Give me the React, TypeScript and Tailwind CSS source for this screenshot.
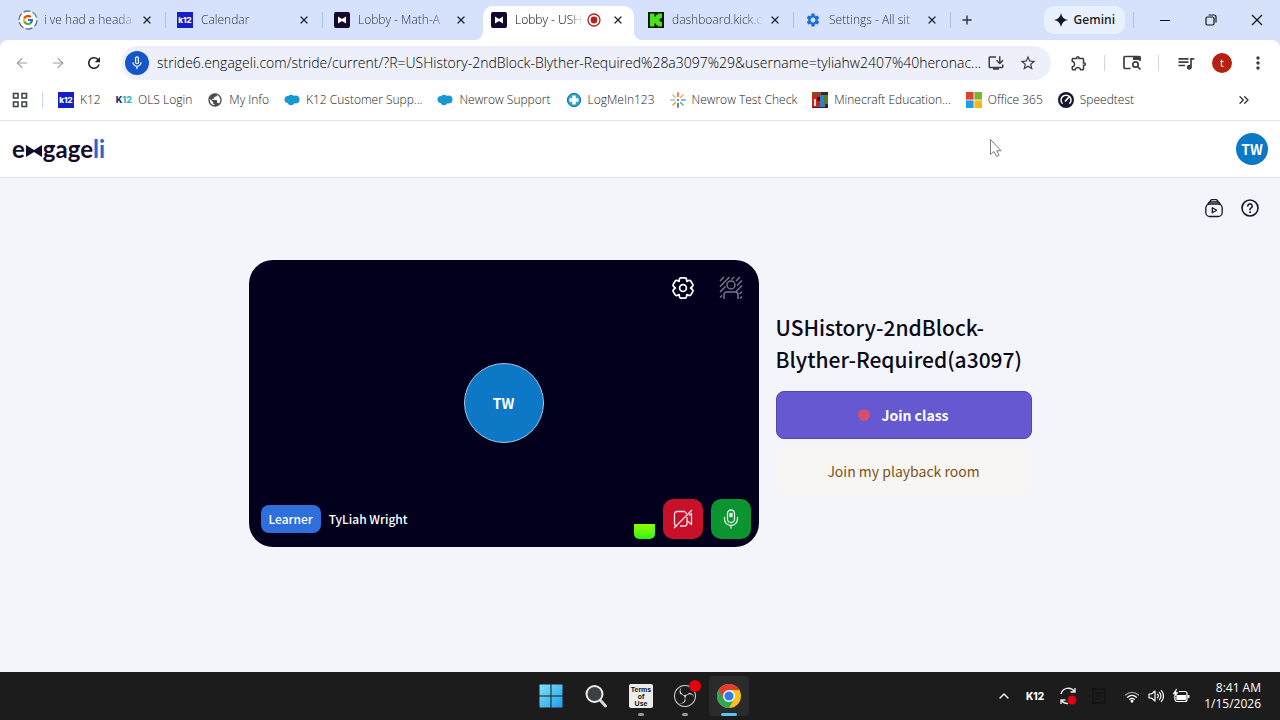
import type { ReactNode } from "react";
import { ArrowLeft, ArrowRight, ChevronUp, ChevronsRight, Plus, X } from "lucide-react";
import { FcGoogle } from "react-icons/fc";
import { MdMicNone, MdPublic, MdQueueMusic, MdRefresh, MdSettings, MdStarBorder, MdOutlineExtension, MdInstallDesktop, MdMoreVert } from "react-icons/md";
import { SiObsstudio } from "react-icons/si";

const url =
  "stride6.engageli.com/stride/current/?R=USHistory-2ndBlock-Blyther-Required%28a3097%29&username=tyliahw2407%40heronac...";

function K12Icon() {
  return (
    <span className="flex size-4 shrink-0 items-center justify-center bg-[#1420c4] font-['Inter'] text-[8px] leading-none font-extrabold text-white">
      k12
    </span>
  );
}

function BowTieIcon() {
  return (
    <svg viewBox="0 0 16 16" className="size-4 shrink-0">
      <rect width="16" height="16" rx="2" fill="#130a2b" />
      <path d="M4 4.500 8 7l4-2.500v7L8 9l-4 2.500z" fill="#fff" />
    </svg>
  );
}

function GoogleIcon() {
  return (
    <span className="relative flex size-4 shrink-0 items-center justify-center">
      <svg viewBox="0 0 20 20" className="absolute -inset-0.5 size-5">
        <circle cx="10" cy="10" r="9" fill="#fff" stroke="#5d7391" strokeWidth="1.300" strokeDasharray="7 2.400" />
      </svg>
      <FcGoogle className="relative size-3" />
    </span>
  );
}

function KickIcon() {
  return (
    <svg viewBox="0 0 16 16" className="size-4 shrink-0">
      <rect width="16" height="16" fill="#0a1408" />
      <path d="M2 1.500h4.500v3H8V3h1.500V1.500H14V6h-1.500v1.500H11v1h1.500V10H14v4.500H9.500V13H8v-1.500H6.500v3H2z" fill="#4be01e" />
    </svg>
  );
}

function CloudIcon() {
  return (
    <svg viewBox="0 0 16 16" className="size-4 shrink-0" fill="#1798d0">
      <circle cx="4" cy="7.500" r="3.500" />
      <circle cx="7" cy="5.800" r="3" />
      <circle cx="11.500" cy="7.500" r="4" />
      <circle cx="7" cy="9.800" r="3.400" />
    </svg>
  );
}

function LogMeInIcon() {
  return (
    <svg viewBox="0 0 16 16" className="size-4 shrink-0">
      <circle cx="8" cy="8" r="7" fill="#2ba8df" />
      <circle cx="8" cy="8" r="6.500" fill="none" stroke="#1c6d9c" />
      <path d="M6.300 3.500h3.400v2.800h2.800v3.400H9.700v2.800H6.300V9.700H3.500V6.300h2.800z" fill="#fff" />
    </svg>
  );
}

function SparkIcon() {
  const colors = ["#e0574f", "#e9b44c", "#4aa3df", "#58b28a", "#445a78", "#e9a23c", "#8ac6d8", "#e8c45a"];
  return (
    <svg viewBox="0 0 16 16" className="size-4 shrink-0" strokeWidth="1.500" strokeLinecap="round">
      {colors.map((c, i) => (
        <path key={c} d="M8 .8v3.700" stroke={c} transform={`rotate(${i * 45} 8 8)`} />
      ))}
      <circle cx="8" cy="8" r="1" fill="#445a78" />
    </svg>
  );
}

function MinecraftIcon() {
  return (
    <svg viewBox="0 0 16 16" className="size-4 shrink-0">
      <rect width="16" height="16" fill="#3b2723" />
      <rect y="3" width="8" height="12" fill="#c8231c" />
      <path d="M2 7h2v7H2z" fill="#f0d8d0" />
      <rect x="8" y="3" width="5" height="12" fill="#2c7fc9" />
      <rect x="12" y="3" width="4" height="9" fill="#567d2a" />
      <path d="M0 0h9v3H0z" fill="#8a4a26" />
      <path d="M5 5h3v4H5z" fill="#35151a" />
    </svg>
  );
}

function MicrosoftIcon() {
  return (
    <svg viewBox="0 0 16 16" className="size-4 shrink-0">
      <path d="M0 0h7.600v7.600H0z" fill="#e0412c" />
      <path d="M8.400 0H16v7.600H8.400z" fill="#76b82a" />
      <path d="M0 8.400h7.600V16H0z" fill="#1d9fe3" />
      <path d="M8.400 8.400H16V16H8.400z" fill="#f8b71c" />
    </svg>
  );
}

function SpeedtestIcon() {
  return (
    <svg viewBox="0 0 16 16" className="size-4 shrink-0">
      <circle cx="8" cy="8" r="8" fill="#15152b" />
      <path d="M4.600 11.800a5 5 0 1 1 6.800 0" fill="none" stroke="#fff" strokeWidth="1.500" />
      <path d="m7 9.500 3.800-4.200" stroke="#fff" strokeWidth="1.700" />
    </svg>
  );
}

const tabs = [
  { title: "i ve had a heada", icon: <GoogleIcon /> },
  { title: "Calendar", icon: <K12Icon /> },
  { title: "Lobby - Math-A", icon: <BowTieIcon /> },
  { title: "Lobby - USH", icon: <BowTieIcon />, active: true },
  { title: "dashboard.kick.c", icon: <KickIcon /> },
  { title: "Settings - All sit", icon: <MdSettings className="size-4 shrink-0 text-[#1a6fd8]" /> },
];

const bookmarks = [
  { label: "K12", icon: <K12Icon /> },
  {
    label: "OLS Login",
    icon: (
      <span className="font-['Inter'] text-[9px] leading-4 font-extrabold text-[#12356b]">
        K<span className="text-[#2bb5c9]">12</span>
      </span>
    ),
  },
  { label: "My Info", icon: <MdPublic className="size-4 shrink-0 text-[#4a4c50]" /> },
  { label: "K12 Customer Supp...", icon: <CloudIcon /> },
  { label: "Newrow Support", icon: <CloudIcon /> },
  { label: "LogMeIn123", icon: <LogMeInIcon /> },
  { label: "Newrow Test Check", icon: <SparkIcon /> },
  { label: "Minecraft Education...", icon: <MinecraftIcon /> },
  { label: "Office 365", icon: <MicrosoftIcon /> },
  { label: "Speedtest", icon: <SpeedtestIcon /> },
];

function Tab({ title, icon, active, divider }: { title: string; icon: ReactNode; active?: boolean; divider: boolean }) {
  return (
    <div className="relative flex w-[157px] min-w-0 items-end">
      <div className={`flex h-[34px] w-full items-center pb-[6px] ${active ? "mx-[3px] rounded-t-[10px] bg-white pl-2" : "pl-[11px]"}`}>
        {icon}
        <span
          className={`ml-2 grow overflow-hidden text-[12px] leading-4 font-light whitespace-nowrap [mask-image:linear-gradient(to_right,black_80%,transparent)] ${active ? "max-w-[68px] text-black" : "max-w-[92px] text-[#2b3242]"}`}
        >
          {title}
        </span>
        {active && (
          <svg viewBox="0 0 14 14" className="ml-1 size-[14px] shrink-0" role="img" aria-label="Recording">
            <circle cx="7" cy="7" r="6" fill="none" stroke="#b3261e" strokeWidth="1.300" />
            <circle cx="7" cy="7" r="3.400" fill="#b3261e" />
          </svg>
        )}
        <button className={`ml-auto flex size-4 shrink-0 items-center justify-center ${active ? "mr-2" : "mr-[11px]"}`} aria-label="Close tab">
          <X className="size-3 text-[#1f2530]" strokeWidth={2.6} />
        </button>
      </div>
      {active && (
        <>
          <svg viewBox="0 0 8 8" className="absolute bottom-0 -left-[5px] size-2">
            <path d="M8 0v8H0a8 8 0 0 0 8-8z" fill="#fff" />
          </svg>
          <svg viewBox="0 0 8 8" className="absolute -right-[5px] bottom-0 size-2">
            <path d="M0 0v8h8a8 8 0 0 1-8-8z" fill="#fff" />
          </svg>
        </>
      )}
      {divider && <div className="absolute top-3 right-0 h-4 w-px bg-[#a9bfe4]" />}
    </div>
  );
}

function Browser() {
  return (
    <div className="bg-[#d6e2fb] font-['Open_Sans',sans-serif]">
      <div className="flex h-10 pl-[9px]">
        {tabs.map((t, i) => (
          <Tab key={t.title} {...t} divider={i !== 2 && i !== 3} />
        ))}
        <button className="ml-2 flex w-4 items-center justify-center" aria-label="New tab">
          <Plus className="size-[14px] shrink-0 text-[#2c3442]" strokeWidth={2.4} />
        </button>
        <div className="ml-auto flex items-center">
          <button className="flex h-7 items-center gap-[6px] rounded-[10px] bg-[#e9f1fe] px-[10px] text-[12px] font-semibold text-[#1f1f1f]">
            <svg viewBox="0 0 14 14" className="size-[14px]">
              <path d="M7 0q1 6 7 7-6 1-7 7-1-6-7-7 6-1 7-7z" fill="#15181f" />
            </svg>
            Gemini
          </button>
          <div className="mr-2 ml-2 h-4 w-px bg-[#a9bfe4]" />
          <button className="flex h-10 w-[46px] items-center justify-center" aria-label="Minimize">
            <svg viewBox="0 0 10 10" className="size-[10px]"><path d="M0 5.500h10" stroke="#111" /></svg>
          </button>
          <button className="flex h-10 w-[46px] items-center justify-center" aria-label="Restore">
            <svg viewBox="0 0 12 12" className="size-3" fill="none" stroke="#111" strokeWidth="1.200">
              <rect x="1" y="3" width="8" height="8" rx="1.500" />
              <path d="M3.500 1H9a2 2 0 0 1 2 2v5.500" />
            </svg>
          </button>
          <button className="flex h-10 w-[46px] items-center justify-center" aria-label="Close">
            <svg viewBox="0 0 12 12" className="size-3"><path d="m1 1 10 10M11 1 1 11" stroke="#111" strokeWidth="1.200" /></svg>
          </button>
        </div>
      </div>

      <div className="rounded-t-lg border-b border-[#e3e5ea] bg-white">
        <div className="flex h-[46px] items-center pl-[14px] text-[#3a3d42]">
          <button className="mr-5 text-[#9a9da2]" aria-label="Back"><ArrowLeft className="size-4" strokeWidth={1.7} /></button>
          <button className="mr-[19px] text-[#9a9da2]" aria-label="Forward"><ArrowRight className="size-4" strokeWidth={1.7} /></button>
          <button className="mr-[18px] text-[#1f1f1f]" aria-label="Reload"><MdRefresh className="size-[18px]" /></button>
          <div className="flex h-[34px] min-w-0 grow items-center rounded-full bg-[#edf0fa] pl-1">
            <button className="flex size-6 shrink-0 items-center justify-center rounded-full bg-[#1556cc] text-white" aria-label="Microphone in use">
              <MdMicNone className="size-4" />
            </button>
            <input
              aria-label="Address"
              defaultValue={url}
              className="ml-2 w-0 min-w-0 grow bg-transparent text-[14px] leading-5 font-light text-ellipsis text-black outline-none"
            />
            <button className="ml-1 shrink-0" aria-label="Install app"><MdInstallDesktop className="size-[18px]" /></button>
            <button className="mr-[14px] ml-[14px] shrink-0" aria-label="Bookmark"><MdStarBorder className="size-[18px]" /></button>
          </div>
          <button className="ml-[19px]" aria-label="Extensions"><MdOutlineExtension className="size-[18px]" /></button>
          <div className="mx-4 h-4 w-px bg-[#c9d6ee]" />
          <button className="ml-[2px]" aria-label="Search side panel">
            <svg viewBox="0 0 18 16" className="h-4 w-[18px]" fill="none" stroke="currentColor" strokeWidth="1.700">
              <path d="M7.500 13.500H2a1 1 0 0 1-1-1v-10a1 1 0 0 1 1-1h14a1 1 0 0 1 1 1V6" />
              <path d="M10 1h7.500v4H10z" fill="currentColor" stroke="none" />
              <circle cx="12.500" cy="9.500" r="2.700" />
              <path d="m14.500 11.500 3 3" />
            </svg>
          </button>
          <div className="mx-[17px] h-4 w-px bg-[#c9d6ee]" />
          <button aria-label="Media controls"><MdQueueMusic className="size-5" /></button>
          <button className="ml-4 flex size-5 items-center justify-center rounded-full bg-[#b5200f] text-[11px] text-white">t</button>
          <button className="mr-3 ml-4" aria-label="Menu"><MdMoreVert className="size-5" /></button>
        </div>

        <div className="flex h-[34px] items-center pb-[6px] pl-3">
          <button className="flex size-4 items-center justify-center" aria-label="Apps">
            <svg viewBox="0 0 16 16" className="size-4" fill="none" stroke="#44474b" strokeWidth="1.600">
              <rect x="1.500" y="1.500" width="4.500" height="4.500" />
              <rect x="10" y="1.500" width="4.500" height="4.500" />
              <rect x="1.500" y="10" width="4.500" height="4.500" />
              <rect x="10" y="10" width="4.500" height="4.500" />
            </svg>
          </button>
          <div className="mr-[15px] ml-[14px] h-4 w-px bg-[#c9d6ee]" />
          <nav className="flex items-center gap-[15px]">
            {bookmarks.map((b) => (
              <a key={b.label} href="#" className="flex items-center gap-[6px] text-[12px] leading-4 font-light whitespace-nowrap text-[#202226]">
                {b.icon}
                {b.label}
              </a>
            ))}
          </nav>
          <button className="mr-7 ml-auto" aria-label="More bookmarks"><ChevronsRight className="size-4 text-[#33363b]" /></button>
        </div>
      </div>
    </div>
  );
}

function Logo() {
  return (
    <a href="#" aria-label="engageli" className="flex items-center font-['Lato'] text-[24px] leading-7 font-bold text-[#130d2b]">
      e
      <svg viewBox="0 0 16 12" className="mt-1 mr-px ml-px h-3 w-4">
        <path d="M0 0 8 5l8-5v12L8 7l-8 5z" fill="#130d2b" />
      </svg>
      gage<span className="text-[#2c5fdd]">li</span>
    </a>
  );
}

function VideoPreview() {
  return (
    <section className="flex aspect-video w-[510px] flex-col justify-between rounded-3xl bg-[#03001e] p-2 text-white">
      <div className="flex justify-end gap-2">
        <button className="flex size-10 items-center justify-center" aria-label="Settings">
          <svg viewBox="0 0 24 24" className="size-6" fill="none" stroke="#fff" strokeWidth="1.700" strokeLinejoin="round">
            <path d="M8.200 5.400C8.200 3 8.700 1.800 10 1.800h4c1.300 0 1.800 1.200 1.800 3.600 2-1.100 3.400-1.300 4.100-.2l1.900 3.200c.7 1.200-.2 2.300-2.200 3.600 2 1.300 2.900 2.400 2.200 3.600l-1.900 3.200c-.7 1.100-2.100.9-4.100-.2 0 2.400-.5 3.600-1.800 3.600h-4c-1.300 0-1.800-1.200-1.800-3.600-2 1.100-3.400 1.300-4.100.2l-1.900-3.200c-.7-1.200.2-2.300 2.200-3.600-2-1.300-2.900-2.400-2.200-3.600l1.900-3.200c.7-1.100 2.100-.9 4.100.2z" />
            <circle cx="12" cy="12" r="3.400" />
          </svg>
        </button>
        <button className="flex size-10 items-center justify-center" aria-label="Background effects">
          <svg viewBox="0 0 24 24" className="size-6" fill="none" stroke="#77758a" strokeWidth="1.500">
            <circle cx="12" cy="9" r="4" />
            <path d="M5 23v-4.500A2.500 2.500 0 0 1 7.500 16h9a2.500 2.500 0 0 1 2.500 2.500V23" />
            <path d="m1 5 4-4M1 10.500 10.500 1M1 16l5.500-5.500M1 21.500l2-2M12.500 3.500 15 1M17 5l4-4M18 9.500l5-5M17 15.500l6-6M20.500 18l2.500-2.500M21 22.500l2-2" />
          </svg>
        </button>
      </div>

      <div className="flex size-20 items-center justify-center self-center rounded-full border border-[#a9c6e6] bg-[#0c78c6] text-[14px] font-bold">
        TW
      </div>

      <div className="flex items-end">
        <div className="mb-[6px] ml-1 flex items-center gap-2 text-[12px] leading-5 font-medium">
          <span className="rounded-lg bg-[#2f6fdc] px-2 py-1">Learner</span>
          <span>TyLiah Wright</span>
        </div>
        <div className="ml-auto h-[15px] w-[21px] rounded-b-[5px] bg-linear-to-b from-[#8dfb00] to-[#16f416]" />
        <button className="ml-2 flex size-10 items-center justify-center rounded-[10px] bg-[#c8102a]" aria-label="Turn camera on">
          <svg viewBox="0 0 20 20" className="size-5" fill="none" stroke="#fbe3e6" strokeWidth="1.300" strokeLinejoin="round">
            <path d="M13.500 5a3 3 0 0 0-2-2.500H4A2.500 2.500 0 0 0 1.500 5v9.500A2.500 2.500 0 0 0 4 17M7 17h4.500a2.500 2.500 0 0 0 2.500-2.500V8M14 11.500l4.500 4V4.500L16 6.500M1 19 19 1" />
          </svg>
        </button>
        <button className="ml-2 flex size-10 items-center justify-center rounded-[10px] bg-[#0c9430]" aria-label="Mute microphone">
          <svg viewBox="0 0 20 20" className="size-5" fill="none" stroke="#e2f6e6" strokeWidth="1.300" strokeLinecap="round">
            <rect x="6.500" y="1" width="7" height="12.500" rx="3.500" />
            <path d="M3.500 8.500v1.500a6.500 6.500 0 0 0 13 0V8.500M10 16.500V19" />
            <rect x="9" y="4.500" width="2" height="3" fill="#e2f6e6" />
          </svg>
        </button>
      </div>
    </section>
  );
}

function Lobby() {
  return (
    <div className="flex grow flex-col bg-[#f4f5fa] font-['Noto_Sans_CJK_SC',sans-serif]">
      <header className="flex h-[57px] items-center justify-between border-b border-[#e2e4ea] bg-white px-3">
        <Logo />
        <button className="flex size-8 items-center justify-center rounded-full bg-[#0c78c6] text-[14px] font-bold text-white">TW</button>
      </header>

      <main className="flex flex-col">
        <div className="flex justify-end gap-4 pt-5 pr-5 text-[#17172a]">
          <button aria-label="Recordings">
            <svg viewBox="0 0 20 20" className="size-5" fill="none" stroke="currentColor" strokeWidth="1.300" strokeLinejoin="round">
              <rect x="1.800" y="6" width="16.400" height="12.500" rx="4" />
              <path d="M4 6.500C4.200 4.800 5 4 6.500 4h7c1.500 0 2.300.8 2.500 2.500M6 4c.2-1.600 1-2.300 2.200-2.300h3.600C13 1.700 13.800 2.400 14 4" />
              <path d="M8.300 9.800v5l4.300-2.500z" />
            </svg>
          </button>
          <button aria-label="Help">
            <svg viewBox="0 0 20 20" className="size-5" fill="none" stroke="currentColor" strokeWidth="1.600" strokeLinecap="round">
              <circle cx="10" cy="10" r="8" />
              <path d="M7.800 8a2.200 2.200 0 1 1 3.400 1.900c-.8.500-1.200.9-1.200 1.800" />
              <circle cx="10" cy="14.200" r=".5" fill="currentColor" strokeWidth="1" />
            </svg>
          </button>
        </div>

        <div className="mt-[42px] flex flex-wrap items-center justify-center gap-[17px] pb-10">
          <VideoPreview />
          <section className="flex w-64 flex-col">
            <h1 className="text-[21px] leading-8 font-medium text-[#0a0a18]">USHistory-2ndBlock-Blyther-Required(a3097)</h1>
            <button className="mt-4 flex h-12 items-center justify-center gap-[11px] rounded-lg border border-[#4f46b8] bg-[#6558d0] text-[14px] font-bold text-white">
              <span className="size-3 rounded-full bg-[#d2506e]" />
              Join class
            </button>
            <button className="mt-2 h-12 rounded-lg bg-[#f8f6f3] text-[14px] text-[#7a5418]">Join my playback room</button>
          </section>
        </div>
      </main>
    </div>
  );
}

function ChromeIcon() {
  return (
    <svg viewBox="0 0 24 24" className="size-6">
      <circle cx="12" cy="12" r="12" fill="#fbc116" />
      <path d="M12 12 1.600 6A12 12 0 0 0 12 24l5.200-9z" fill="#2da94f" />
      <path d="M12 6h10.400A12 12 0 0 0 1.600 6l5.200 9L12 12z" fill="#e33b2e" />
      <circle cx="12" cy="12" r="6" fill="#fff" />
      <circle cx="12" cy="12" r="4.600" fill="#2f7de9" />
    </svg>
  );
}

function Taskbar() {
  return (
    <footer className="grid h-12 grid-cols-[1fr_auto_1fr] items-center bg-[#1c1c1c] font-['Open_Sans',sans-serif] text-white">
      <div />
      <div className="flex items-center gap-1">
        <button className="flex size-10 items-center justify-center" aria-label="Start">
          <svg viewBox="0 0 24 24" className="size-6">
            <defs>
              <linearGradient id="win" x1="0" y1="0" x2="1" y2="1">
                <stop offset="0" stopColor="#7fe3fb" />
                <stop offset="1" stopColor="#1f9ce8" />
              </linearGradient>
            </defs>
            <path d="M.5.5h11v11H.5zM12.500.5h11v11h-11zM.5 12.500h11v11H.5zM12.500 12.500h11v11h-11z" fill="url(#win)" />
          </svg>
        </button>
        <button className="flex h-10 w-[42px] items-center justify-center" aria-label="Search">
          <svg viewBox="0 0 24 24" className="size-6">
            <path d="m16.500 16.500 5 5.500" stroke="#dcdcdc" strokeWidth="3" strokeLinecap="round" />
            <circle cx="10.500" cy="10" r="8" fill="#3c4043" stroke="#ececec" strokeWidth="2" />
          </svg>
        </button>
        <button className="relative flex size-10 items-center justify-center" aria-label="Terms of Use">
          <span className="flex size-6 flex-col items-center justify-center rounded-xs bg-[#ececec] font-['Liberation_Sans'] text-[7px] leading-[7px] font-bold text-[#111]">
            <span>Terms</span>
            <span>of</span>
            <span>Use</span>
          </span>
          <span className="absolute bottom-0 h-[3px] w-[6px] rounded-full bg-[#9a9a9a]" />
        </button>
        <button className="relative flex size-10 items-center justify-center" aria-label="OBS Studio">
          <SiObsstudio className="size-[22px] text-[#d8d8d8]" />
          <span className="absolute top-1 right-1 size-3 rounded-full bg-[#e3000f]" />
          <span className="absolute bottom-0 h-[3px] w-[6px] rounded-full bg-[#9a9a9a]" />
        </button>
        <button className="relative flex size-10 items-center justify-center rounded bg-[#2b2b2b]" aria-label="Chrome">
          <ChromeIcon />
          <span className="absolute bottom-0 h-[3px] w-4 rounded-full bg-[#5cc3f2]" />
        </button>
      </div>
      <div className="flex items-center justify-end pr-[19px]">
        <button aria-label="Show hidden icons"><ChevronUp className="size-4" /></button>
        <span className="ml-[14px] font-['Inter'] text-[10px] font-extrabold">K12</span>
        <svg viewBox="0 0 20 20" className="ml-[14px] size-5" fill="none" stroke="#e8e8e8" strokeWidth="1.400">
          <path d="M3 8a7.500 7.500 0 0 1 13.500-2.500M17 2v4h-4.500M3 18v-4h4.500M3.500 14.500A7.500 7.500 0 0 0 10 17.500" />
          <circle cx="14" cy="14" r="4.500" fill="#e3000f" stroke="none" />
        </svg>
        <svg viewBox="0 0 14 16" className="ml-[14px] h-4 w-[14px]" fill="none" stroke="#121212" strokeWidth="1.500">
          <path d="M1 1h12v14H1zM3 5h8M3 8h8M3 11h5" />
        </svg>
        <button className="ml-[18px] flex items-center gap-2" aria-label="Network, volume and battery">
          <svg viewBox="0 0 16 16" className="size-4" fill="none" stroke="#fff" strokeWidth="1.300" strokeLinecap="round">
            <path d="M1.500 7a9.200 9.200 0 0 1 13 0" stroke="#9a9a9a" />
            <path d="M3.600 9.200a6.200 6.200 0 0 1 8.800 0M5.700 11.300a3.200 3.200 0 0 1 4.600 0" />
            <circle cx="8" cy="13.300" r=".8" fill="#fff" />
          </svg>
          <svg viewBox="0 0 16 16" className="size-4" fill="none" stroke="#fff" strokeWidth="1.200" strokeLinecap="round" strokeLinejoin="round">
            <path d="M1 6v4h2.500L7 13V3L3.500 6zM9.500 6.200a2.600 2.600 0 0 1 0 3.600M11.400 4.400a5.100 5.100 0 0 1 0 7.200M13.300 2.700a7.500 7.500 0 0 1 0 10.600" />
          </svg>
          <svg viewBox="0 0 18 16" className="h-4 w-[18px]" fill="none" stroke="#fff" strokeWidth="1.200">
            <path d="M7 3.500h6A2 2 0 0 1 15 5.500v6a2 2 0 0 1-2 2H5a2 2 0 0 1-2-2V9" />
            <path d="M5 7.500h8.500v4H5z" fill="#fff" />
            <path d="M16.500 7v3" strokeWidth="1.800" />
            <path d="M4.500.8 1 6h2l-.8 3.500L6 4.500H3.800z" fill="#fff" strokeWidth=".5" />
          </svg>
        </button>
        <div className="ml-[14px] text-right text-[12px] leading-4">
          <div>8:41 AM</div>
          <div>1/15/2026</div>
        </div>
      </div>
    </footer>
  );
}

export default function App() {
  return (
    <div className="relative flex min-h-screen flex-col">
      <Browser />
      <Lobby />
      <Taskbar />
      <svg viewBox="0 0 14 20" className="pointer-events-none absolute top-[138px] left-[989px] h-5 w-[14px]">
        <path d="M1.500 1.500v15l3.500-3 2.500 5 2.500-1.200-2.200-4.600H12z" fill="#fff" stroke="#6c6c74" strokeWidth=".9" />
      </svg>
    </div>
  );
}
